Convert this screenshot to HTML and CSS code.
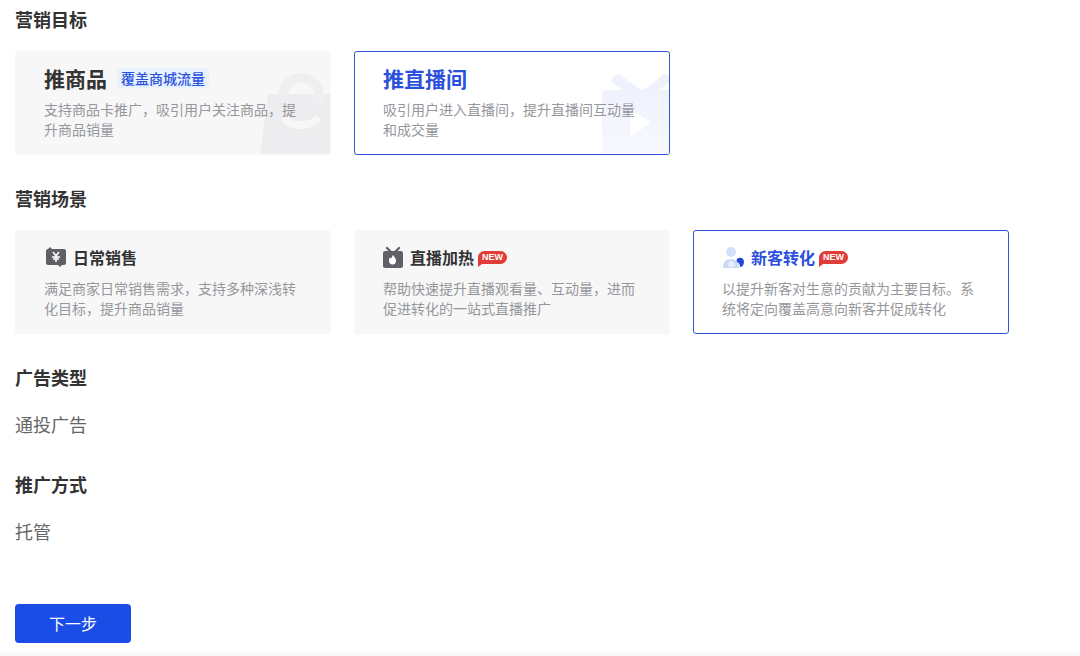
FILE: index.html
```html
<!DOCTYPE html>
<html lang="zh-CN">
<head>
    <meta charset="UTF-8">
    <meta name="viewport" content="width=device-width, initial-scale=1.0">
    <title>营销目标</title>
    <link rel="stylesheet" href="styles.css">
</head>
<body>
    <form class="page">
        <section class="section">
            <h2 class="section-title">营销目标</h2>
            <div class="cards">
                <label class="card">
                    <input class="card-radio" type="radio" name="goal" value="product">
                    <svg class="card-art" width="71" height="83" viewBox="0 0 71 83" aria-hidden="true">
                        <path d="M8 24q0-2 2-2h61v61H0z" fill="#ededef"/>
                        <path d="M23 31v-7a18 18 0 0 1 36 0v7" fill="none" stroke="#efeff1" stroke-width="10"/>
                        <path d="M30 22a11 10 0 0 1 22 0z" fill="#f7f7f7"/>
                        <path d="M26 48c6 7 23 7 30 0" fill="none" stroke="#f7f7f7" stroke-width="8" stroke-linecap="round"/>
                    </svg>
                    <span class="card-head card-head-large">推商品<span class="tag">覆盖商城流量</span></span>
                    <span class="card-desc">支持商品卡推广，吸引用户关注商品，提升商品销量</span>
                </label>
                <label class="card">
                    <input class="card-radio" type="radio" name="goal" value="live" checked>
                    <svg class="card-art" width="70" height="82" viewBox="0 0 70 82" aria-hidden="true">
                        <defs>
                            <linearGradient id="tv" x1="0" y1="0" x2="0" y2="1">
                                <stop offset="0" stop-color="#eff2fd"/>
                                <stop offset="1" stop-color="#f8f9ff"/>
                            </linearGradient>
                        </defs>
                        <path d="M6 17h64v65H2V21q0-4 4-4z" fill="url(#tv)"/>
                        <path d="M11 7l6-6q1-1 2 0l20 15q3 2 6 0L64 1q1-1 2 0l4 4v3L56 20H28L11 9q-1-1 0-2z" fill="#eff2fd"/>
                        <path d="M30 38q0-2 2-1l17 11q2 2 0 3L32 63q-2 1-2-1z" fill="#fff"/>
                    </svg>
                    <span class="card-head card-head-large">推直播间</span>
                    <span class="card-desc">吸引用户进入直播间，提升直播间互动量和成交量</span>
                </label>
            </div>
        </section>

        <section class="section">
            <h2 class="section-title">营销场景</h2>
            <div class="cards">
                <label class="card">
                    <input class="card-radio" type="radio" name="scene" value="daily">
                    <span class="card-head">
                        <svg class="icon" width="22" height="22" viewBox="0 0 22 22" aria-hidden="true">
                            <path d="M4 3l2-2 2 2h12q2 0 2 2v12q0 2-2 2h-2l-2 2-2-2H4q-2 0-2-2V5q0-2 2-2z" fill="#606166"/>
                            <path d="M9 6l3 4 3-4M12 10v6M8 11h8M9 13h6" fill="none" stroke="#fff" stroke-width="1.5"/>
                        </svg>
                        日常销售
                    </span>
                    <span class="card-desc">满足商家日常销售需求，支持多种深浅转化目标，提升商品销量</span>
                </label>
                <label class="card">
                    <input class="card-radio" type="radio" name="scene" value="heat">
                    <span class="card-head">
                        <svg class="icon" width="20" height="22" viewBox="0 0 20 22" aria-hidden="true">
                            <path d="M4 2l4 4M16 2l-4 4" fill="none" stroke="#606166" stroke-width="2.4" stroke-linecap="round"/>
                            <rect x="0" y="5" width="20" height="17" rx="2" fill="#606166"/>
                            <path d="M10 9c1 2 3 3 3 5.500a3.500 4 0 0 1-7 0c0-1 0-2 1-3l1 1c1-1 1-2 2-3.500z" fill="#fff"/>
                        </svg>
                        直播加热
                        <span class="badge">NEW</span>
                    </span>
                    <span class="card-desc">帮助快速提升直播观看量、互动量，进而促进转化的一站式直播推广</span>
                </label>
                <label class="card">
                    <input class="card-radio" type="radio" name="scene" value="newcomer" checked>
                    <span class="card-head">
                        <svg class="icon" width="22" height="22" viewBox="0 0 22 22" aria-hidden="true">
                            <circle cx="9" cy="6" r="5" fill="#d3e0fb"/>
                            <path d="M1 22c0-6 3-9 8-9s7 3 8 9z" fill="#c9d9f9"/>
                            <path d="M6 20c0-3 1-5 3-5s4 2 4 5q-4 2-7 0z" fill="#e8effd"/>
                            <path d="M17 12c3-1 5 1 5 4s-2 5-4 5q0-4-3-5c-1-2 0-4 2-4z" fill="#2049d8"/>
                        </svg>
                        新客转化
                        <span class="badge">NEW</span>
                    </span>
                    <span class="card-desc">以提升新客对生意的贡献为主要目标。系统将定向覆盖高意向新客并促成转化</span>
                </label>
            </div>
        </section>

        <section class="section">
            <h2 class="section-title">广告类型</h2>
            <p class="section-value">通投广告</p>
        </section>

        <section class="section">
            <h2 class="section-title">推广方式</h2>
            <p class="section-value">托管</p>
        </section>

        <button class="next-button" type="button">下一步</button>
    </form>
</body>
</html>
```

FILE: styles.css
```css
* {
    box-sizing: border-box;
}

body {
    margin: 0;
    font-family: "Noto Sans CJK SC", sans-serif;
    background-color: #fafafa;
    color: #333;
}

.page {
    padding: 5px 71px 9px 15px;
    background-color: #fff;
}

.section {
    margin-bottom: 29px;
}

.section-title {
    margin: 0 0 18px;
    font-size: 18px;
    line-height: 28px;
    font-weight: 700;
}

.section-value {
    margin: 0;
    padding-bottom: 2px;
    font-size: 18px;
    line-height: 30px;
    color: #666;
}

.cards {
    display: grid;
    grid-template-columns: repeat(3, 1fr);
    gap: 23px;
}

.card {
    position: relative;
    display: flex;
    flex-direction: column;
    gap: 9px;
    padding: 14px 28px 15px;
    border: 1px solid #f7f7f7;
    border-radius: 3px;
    background-color: #f7f7f7;
    cursor: pointer;
    overflow: hidden;
}

.card:has(.card-radio:checked) {
    border-color: #2f54d8;
    background-color: #fff;
}

.card:has(.card-radio:checked) .card-head {
    color: #2b50dc;
}

/* the whole card is the radio */
.card-radio {
    position: absolute;
    inset: 0;
    margin: 0;
    appearance: none;
    cursor: pointer;
}

.card-art {
    position: absolute;
    right: -1px;
    bottom: -1px;
}

.card-head {
    display: flex;
    align-items: center;
    gap: 4px;
    font-size: 16px;
    line-height: 24px;
    font-weight: 700;
}

.card-head-large {
    gap: 10px;
    font-size: 21px;
}

.icon {
    flex: none;
    margin-right: 3px;
}

.tag {
    padding: 0 4px;
    border-radius: 2px;
    background-color: #e8f2ff;
    color: #2b50dc;
    font-size: 14px;
    line-height: 20px;
    font-weight: 500;
}

.badge {
    position: relative;
    padding: 0 4px;
    border-radius: 7px 7px 7px 0;
    background-color: #e23c39;
    color: #fff;
    font-family: "Liberation Sans", sans-serif;
    font-size: 9px;
    line-height: 13px;
}

.badge::after {
    content: "";
    position: absolute;
    left: 0;
    top: 100%;
    border-top: 3px solid #e23c39;
    border-right: 4px solid transparent;
}

.card-desc {
    position: relative;
    font-size: 14px;
    line-height: 20px;
    color: #96979c;
}

.next-button {
    display: block;
    margin-top: 56px;
    padding: 0 34px;
    border: none;
    border-radius: 4px;
    background-color: #1a4ce6;
    color: #fff;
    font-family: inherit;
    font-size: 16px;
    line-height: 39px;
    cursor: pointer;
}

.next-button:hover {
    background-color: #1540c9;
}
```
